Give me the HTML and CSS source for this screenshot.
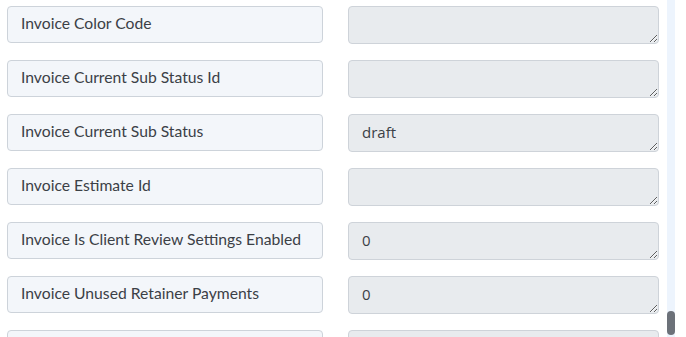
FILE: index.html
```html
<html>

<head>
    <title>Invoice Fields</title>

    <link rel="stylesheet" href="styles.css">
</head>

<body>
    <div class="page">
        <div class="fields">
            <div class="field-row">
                <div class="field-label">Invoice Color Code</div>
                <textarea class="field-value" readonly></textarea>
            </div>
            <div class="field-row">
                <div class="field-label">Invoice Current Sub Status Id</div>
                <textarea class="field-value" readonly></textarea>
            </div>
            <div class="field-row">
                <div class="field-label">Invoice Current Sub Status</div>
                <textarea class="field-value" readonly>draft</textarea>
            </div>
            <div class="field-row">
                <div class="field-label">Invoice Estimate Id</div>
                <textarea class="field-value" readonly></textarea>
            </div>
            <div class="field-row">
                <div class="field-label">Invoice Is Client Review Settings Enabled</div>
                <textarea class="field-value" readonly>0</textarea>
            </div>
            <div class="field-row">
                <div class="field-label">Invoice Unused Retainer Payments</div>
                <textarea class="field-value" readonly>0</textarea>
            </div>
            <!-- next row only peeks in at the bottom -->
            <div class="field-row">
                <div class="field-label"></div>
                <textarea class="field-value" readonly></textarea>
            </div>
        </div>

        <!-- fake scrollbar -->
        <div class="scroll-track">
            <div class="scroll-thumb"></div>
        </div>
    </div>
</body>

</html>
```

FILE: styles.css
```css
body {
    margin: 0;
    background-color: #ffffff;
    overflow: hidden;
    font-family: Lato, "Open Sans", sans-serif;
}

.page {
    display: flex;
    height: 337px;
    width: 675px;
    overflow: hidden;
}

.fields {
    flex: 1;
    display: flex;
    flex-direction: column;
    gap: 16px;
    padding: 6px 8px 0 7px;
}

.field-row {
    display: flex;
    align-items: flex-start;
    gap: 25px;
}

.field-label {
    box-sizing: border-box;
    width: 316px;
    height: 37px;
    padding: 0 13px;
    line-height: 32px;
    font-size: 15.7px;
    color: #3b4046;
    background-color: #f3f6fa;
    border: 1px solid #cdd3da;
    border-radius: 4px;
    white-space: nowrap;
    overflow: hidden;
}

.field-value {
    box-sizing: border-box;
    width: 311px;
    height: 38px;
    margin: 0;
    padding: 6px 13px;
    font-family: "Open Sans", sans-serif;
    font-size: 15px;
    line-height: 22px;
    color: #3b4046;
    background-color: #e8ebee;
    border: 1px solid #ced3d9;
    border-radius: 4px;
    outline: none;
}

.scroll-track {
    position: relative;
    width: 8px;
    background-color: #edf4fd;
}

.scroll-thumb {
    position: absolute;
    left: 0;
    top: 311px;
    width: 8px;
    height: 24px;
    border-radius: 4px;
    background-color: #6c7179;
}
```
